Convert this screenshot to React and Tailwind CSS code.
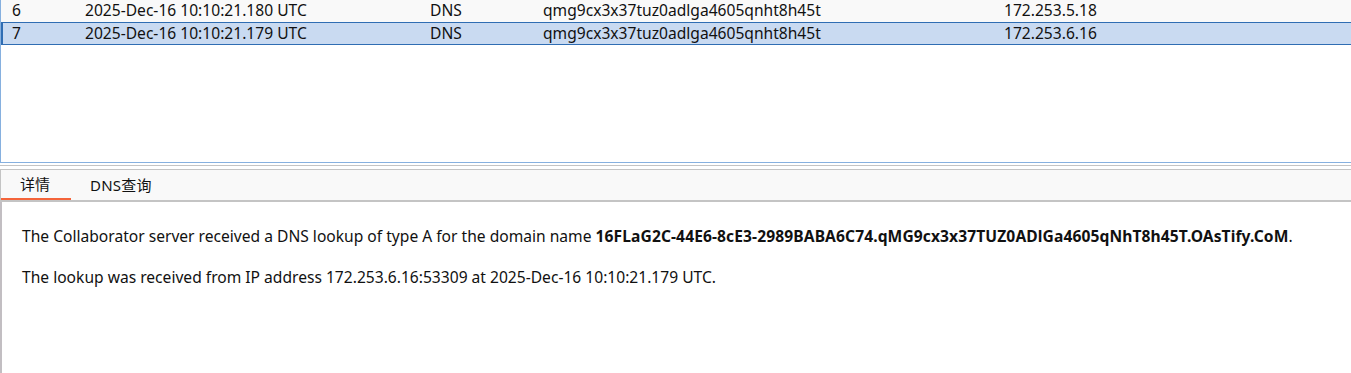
import React from "react";

const FONT = { fontFamily: '"Noto Sans", "Noto Sans CJK SC", sans-serif' };

const rows = [
  { id: 6, time: "2025-Dec-16 10:10:21.180 UTC", type: "DNS", payload: "qmg9cx3x37tuz0adlga4605qnht8h45t", ip: "172.253.5.18" },
  { id: 7, time: "2025-Dec-16 10:10:21.179 UTC", type: "DNS", payload: "qmg9cx3x37tuz0adlga4605qnht8h45t", ip: "172.253.6.16", selected: true },
];

function Row({ row }) {
  const sel = row.selected;
  return (
    <div
      className={
        "flex items-center text-[15.6px] text-[#111] " +
        (sel
          ? "h-[23px] bg-[#c9daf1] border-y border-l-2 border-[#2f6db3]"
          : "h-[22px] bg-[#f9f9f9] border-l-2 border-transparent")
      }
    >
      <span className="w-[82px] pl-[9px]">{row.id}</span>
      <span className="w-[345px]">{row.time}</span>
      <span className="w-[113px]">{row.type}</span>
      <span className="w-[461px]">{row.payload}</span>
      <span>{row.ip}</span>
    </div>
  );
}

export default function App() {
  return (
    <div className="w-[1351px] h-[373px] bg-white overflow-hidden flex flex-col" style={FONT}>
      {/* Request table */}
      <div className="h-[163px] border-l border-b border-[#86b0df] flex flex-col">
        {rows.map((r) => (
          <Row key={r.id} row={r} />
        ))}
      </div>

      {/* Splitter */}
      <div className="h-[2px]" />
      <div className="h-[1px] bg-[#c4c4c4]" />
      <div className="h-[3px]" />

      {/* Tabs */}
      <div className="h-[33px] border-t border-l border-b-2 border-[#c4c4c4] bg-[#f9f9f9] flex items-stretch">
        <div className="w-[70px] flex flex-col">
          <div className="flex-1 flex items-center pl-[19px] text-[15px] text-[#111]">详情</div>
          <div className="h-[2px] bg-[#f4643a]" />
        </div>
        <div className="flex items-center pl-[19px] text-[15px] tracking-[0.2px] text-[#111]">DNS查询</div>
      </div>

      {/* Details */}
      <div className="flex-1 border-l-2 border-[#c2bec2] pl-[20px] pt-[22px] text-[15.6px] text-[#111] leading-[24px]">
        <p>
          The Collaborator server received a DNS lookup of type A for the domain name{" "}
          <span className="font-bold tracking-[0.1px]">16FLaG2C-44E6-8cE3-2989BABA6C74.qMG9cx3x37TUZ0ADlGa4605qNhT8h45T.OAsTify.CoM</span>.
        </p>
        <p className="mt-[17px]">
          The lookup was received from IP address 172.253.6.16:53309 at 2025-Dec-16 10:10:21.179 UTC.
        </p>
      </div>
    </div>
  );
}
